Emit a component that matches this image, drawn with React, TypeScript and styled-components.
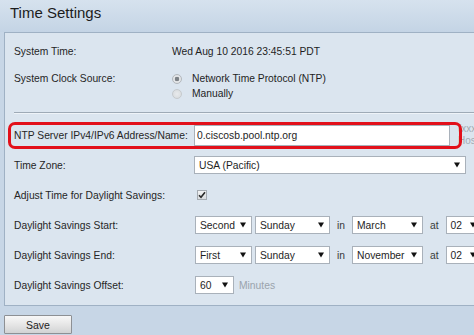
import React from "react";
import styled, { createGlobalStyle } from "styled-components";

const GlobalStyle = createGlobalStyle`
  html, body { margin: 0; padding: 0; }
  body {
    width: 474px;
    height: 335px;
    overflow: hidden;
    background: #c7d6e6;
    font-family: "Liberation Sans", Arial, sans-serif;
    color: #222;
  }
`;

const Page = styled.div`
  display: flex;
  flex-direction: column;
  width: 474px;
  height: 335px;
  overflow: hidden;
`;

const TitleBar = styled.div`
  height: 29px;
  padding: 3px 0 0 10px;
  font-size: 15px;
  line-height: 20px;
  color: #1c1c1c;
  background: linear-gradient(#d6e2ee, #c4d4e5);
`;

const Panel = styled.div`
  margin-left: 4px;
  width: 560px;
  flex-shrink: 0;
  box-sizing: border-box;
  border: 1px solid #9fb1c4;
  background: #dbe5ef;
`;

const TopSection = styled.div`
  padding: 8px 0 0 9px;
  display: flex;
  flex-direction: column;
  gap: 10px;
`;

const LowerSection = styled.div`
  padding: 6px 0 5px 9px;
  display: flex;
  flex-direction: column;
`;

const Separator = styled.div`
  margin: 11px 0 0 9px;
  height: 0;
  border-top: 1px solid #9eaab6;
  border-bottom: 1px solid #eef3f8;
`;

const Row = styled.div<{ $h: number; $top?: boolean }>`
  position: relative;
  display: flex;
  align-items: ${(p) => (p.$top ? "flex-start" : "center")};
  height: ${(p) => p.$h}px;
  font-size: 10.3px;
  line-height: 15px;
`;

const Label = styled.div<{ $w: number }>`
  width: ${(p) => p.$w}px;
  flex-shrink: 0;
  color: #262626;
  white-space: nowrap;
`;

const Value = styled.div`
  color: #1e1e1e;
  white-space: nowrap;
`;

const RadioGroup = styled.div`
  display: flex;
  flex-direction: column;
`;

const RadioLine = styled.div`
  display: flex;
  align-items: center;
  height: 15px;
  gap: 10px;
  color: #1e1e1e;
`;

const RadioDot = styled.span<{ $on?: boolean }>`
  width: 10px;
  height: 10px;
  box-sizing: border-box;
  border-radius: 50%;
  border: 1px solid ${(p) => (p.$on ? "#b3b8bd" : "#c6cacd")};
  background: ${(p) =>
    p.$on
      ? "radial-gradient(circle, #7c8186 0, #7c8186 2px, #e6e8ea 2.6px, #d9dcdf 100%)"
      : "radial-gradient(circle, #e8eaec 0, #d6dadd 100%)"};
  flex-shrink: 0;
`;

const TextInput = styled.input`
  width: 256px;
  height: 21px;
  box-sizing: border-box;
  border: 1px solid #a9b1ba;
  background: #fff;
  padding: 0 2px;
  margin: 0;
  font-family: "Liberation Sans", Arial, sans-serif;
  font-size: 10.3px;
  color: #1e1e1e;
  outline: none;
  flex-shrink: 0;
`;

const Hint = styled.div`
  margin-left: 8px;
  font-size: 10px;
  line-height: 12px;
  color: #a3abb3;
  white-space: nowrap;
`;

const Highlight = styled.div`
  position: absolute;
  left: -6px;
  top: 2px;
  width: 454px;
  height: 27px;
  box-sizing: border-box;
  border: 3px solid #e2101b;
  border-radius: 7px;
  pointer-events: none;
`;

const SelectBox = styled.div<{ $w: number }>`
  width: ${(p) => p.$w}px;
  height: 18px;
  box-sizing: border-box;
  flex-shrink: 0;
  border: 1px solid #a9b1ba;
  background: #fff;
  display: flex;
  align-items: center;
  justify-content: space-between;
  padding: 0 5px 0 4px;
  font-size: 10.3px;
  color: #1e1e1e;
  white-space: nowrap;
`;

const Controls = styled.div<{ $ml?: number }>`
  display: flex;
  align-items: center;
  margin-left: ${(p) => p.$ml ?? 0}px;
  gap: 3px;
`;

const Word = styled.span`
  margin: 0 4px;
  color: #3a3a3a;
`;

const Unit = styled.span`
  margin-left: 2px;
  color: #9aa3ac;
`;

const CheckBox = styled.span`
  margin-left: 3px;
  width: 10px;
  height: 10px;
  box-sizing: border-box;
  border: 1px solid #a5abb1;
  background: linear-gradient(#f2f3f4, #d9dcdf);
  display: flex;
  align-items: center;
  justify-content: center;
`;

const SaveButton = styled.button`
  margin: 9px 0 0 4px;
  width: 68px;
  height: 19px;
  flex-shrink: 0;
  box-sizing: border-box;
  border: 1px solid #8d9094;
  border-radius: 1px;
  background: linear-gradient(#f8f8f8, #e6e6e6 50%, #d2d3d4);
  font-family: "Liberation Sans", Arial, sans-serif;
  font-size: 10.5px;
  color: #222;
  padding: 0;
`;

const Arrow = () => (
  <svg width="6" height="6" viewBox="0 0 6 6">
    <path d="M0 0.5 H6 L3 5.5 Z" fill="#111" />
  </svg>
);

const Select = ({ w, children }: { w: number; children: React.ReactNode }) => (
  <SelectBox $w={w}>
    <span>{children}</span>
    <Arrow />
  </SelectBox>
);

export default function App() {
  return (
    <>
      <GlobalStyle />
      <Page>
        <TitleBar>Time Settings</TitleBar>
        <Panel>
          <TopSection>
            <Row $h={20}>
              <Label $w={158}>System Time:</Label>
              <Value>Wed Aug 10 2016 23:45:51 PDT</Value>
            </Row>
            <Row $h={30} $top>
              <Label $w={158}>System Clock Source:</Label>
              <RadioGroup>
                <RadioLine>
                  <RadioDot $on />
                  <span>Network Time Protocol (NTP)</span>
                </RadioLine>
                <RadioLine>
                  <RadioDot />
                  <span>Manually</span>
                </RadioLine>
              </RadioGroup>
            </Row>
          </TopSection>
          <Separator />
          <LowerSection>
            <Row $h={30}>
              <Label $w={180}>NTP Server IPv4/IPv6 Address/Name:</Label>
              <TextInput defaultValue="0.ciscosb.pool.ntp.org" readOnly />
              <Hint>
                (xxx.xxx.xxx.xxx or
                <br />
                Hostname)
              </Hint>
              <Highlight />
            </Row>
            <Row $h={30}>
              <Label $w={180}>Time Zone:</Label>
              <Select w={272}>USA (Pacific)</Select>
            </Row>
            <Row $h={30}>
              <Label $w={180}>Adjust Time for Daylight Savings:</Label>
              <CheckBox>
                <svg width="8" height="8" viewBox="0 0 8 8">
                  <path d="M1 4.2 L3 6.3 L7 1.2" fill="none" stroke="#2a2a2a" strokeWidth="1.6" />
                </svg>
              </CheckBox>
            </Row>
            <Row $h={30}>
              <Label $w={180}>Daylight Savings Start:</Label>
              <Controls $ml={1}>
                <Select w={57}>Second</Select>
                <Select w={75}>Sunday</Select>
                <Word>in</Word>
                <Select w={71}>March</Select>
                <Word>at</Word>
                <Select w={36}>02</Select>
              </Controls>
            </Row>
            <Row $h={30}>
              <Label $w={180}>Daylight Savings End:</Label>
              <Controls $ml={1}>
                <Select w={57}>First</Select>
                <Select w={75}>Sunday</Select>
                <Word>in</Word>
                <Select w={71}>November</Select>
                <Word>at</Word>
                <Select w={36}>02</Select>
              </Controls>
            </Row>
            <Row $h={30}>
              <Label $w={180}>Daylight Savings Offset:</Label>
              <Controls $ml={1}>
                <Select w={39}>60</Select>
                <Unit>Minutes</Unit>
              </Controls>
            </Row>
          </LowerSection>
        </Panel>
        <SaveButton>Save</SaveButton>
      </Page>
    </>
  );
}
